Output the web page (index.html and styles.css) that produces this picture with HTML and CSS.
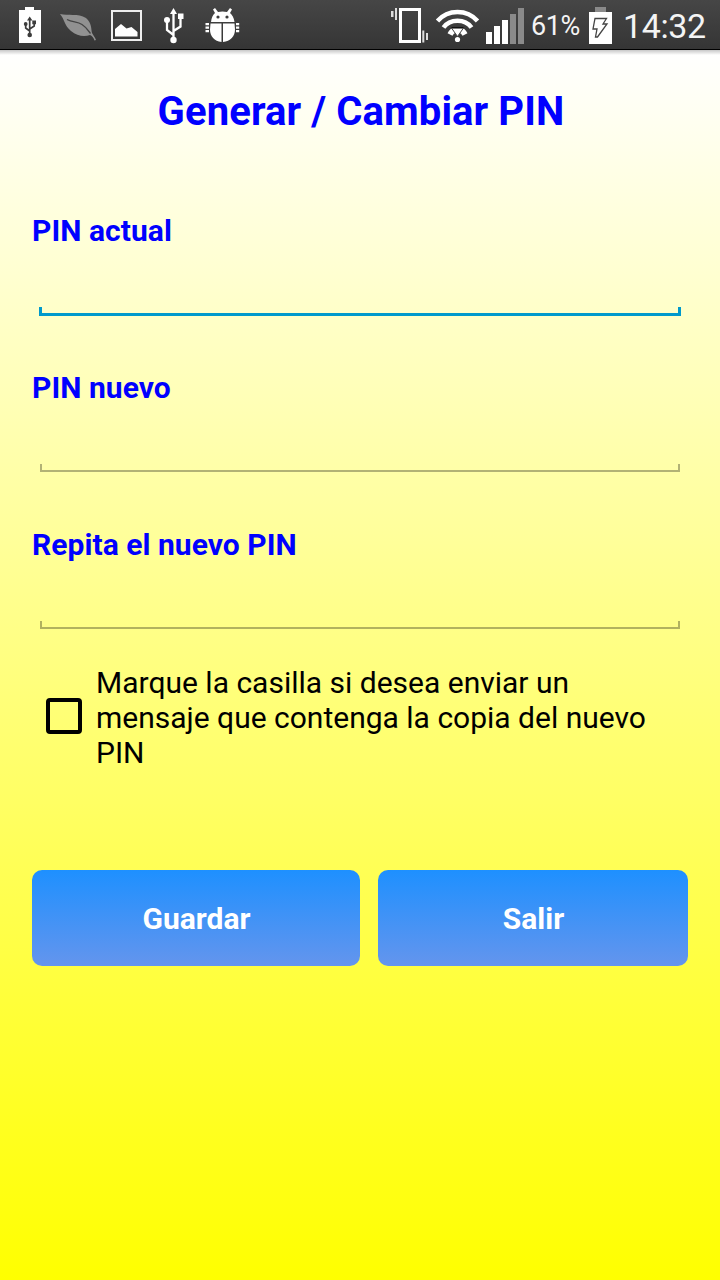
FILE: index.html
```html
<!DOCTYPE html>
<html lang="es">
<head>
    <meta charset="UTF-8">
    <title>Generar / Cambiar PIN</title>
    <meta name="viewport" content="width=device-width, initial-scale=1">
    <link rel="stylesheet" href="styles.css">
</head>
<body>
<header class="status-bar">
    <!-- notifications -->
    <svg class="status-bar__icons" width="250" height="49" viewBox="0 0 250 49">
        <path fill="#fff" d="M19 10h6V7h9v3h7v33H19z"/>
        <g fill="none" stroke="#3c3c3c" stroke-width="1.700">
            <path d="M29.700 19v15M29.700 31l-4-3v-3M29.700 29l4.500-3v-3"/>
            <path fill="#3c3c3c" stroke="none" d="M29.700 16.500l2.700 4h-5.400zM32.300 20.500h3.700v3.700h-3.700z"/>
            <circle cx="29.700" cy="35" r="2.300" fill="#3c3c3c" stroke="none"/>
            <circle cx="25.700" cy="24" r="1.900" fill="#3c3c3c" stroke="none"/>
        </g>
        <path fill="#919191" d="M60 14c8 2 18-1 26 4 6 5 5 11 6 15 1 2 3 4 4 7l-1.500.5c-1-3-2.500-4.500-4.500-5.500-6 2-13 1-19-4-7-6-6-11-11-17z"/>
        <path fill="none" stroke="#444" stroke-width="1.300" d="M67 19.500c6 3 10 2 15 5 4 2.500 6 6 8.500 9"/>
        <path fill="none" stroke="#eee" stroke-width="2" d="M112 11h29v29h-29z"/>
        <path fill="#fff" d="M115 36.500v-7.500l6-5 5.500 4.500 5-1.500 6 5v4.500z"/>
        <g fill="none" stroke="#fff" stroke-width="2.300">
            <path d="M173.500 12v26M173.500 35l-6.500-5v-9M173.500 31l7-4.500V18"/>
            <path fill="#fff" stroke="none" d="M173.500 8l3.500 6h-7zM178 13.500h5.500V19H178z"/>
            <circle cx="173.500" cy="40" r="3.200" fill="#fff" stroke="none"/>
            <circle cx="167" cy="20" r="3" fill="#fff" stroke="none"/>
        </g>
        <g fill="#fff">
            <path d="M211 22c.5-4.500 2-7.500 4-9l-2-3.500 2-1.500 3 4c3-.8 6-.8 9 0l3-4 2 1.500-2 3.500c2 1.500 4 4.500 4.500 9z"/>
            <path d="M210.500 23.500h11V42c-7-.5-11.500-6-11.500-12.500zM223 23.500h11.500l.5 6c0 6.500-4.500 12-12 12.500z"/>
            <path d="M205.500 23h3.500v2.300h-3.500zM205.500 26.500h3.500v2.300h-3.500zM205.500 30h3.500v2.300h-3.500zM236 23h3.200v2.300h-3.200zM236 26.500h3.200v2.300h-3.200zM236 30h3.200v2.300h-3.200z"/>
        </g>
        <circle cx="218" cy="17" r="1.600" fill="#3c3c3c"/>
        <circle cx="227" cy="17" r="1.600" fill="#3c3c3c"/>
    </svg>

    <!-- system -->
    <svg class="status-bar__icons status-bar__icons--system" width="136" height="49" viewBox="390 0 136 49">
        <path fill="none" stroke="#fff" stroke-width="3" d="M400.500 9.500h19v32h-19z"/>
        <path fill="#ddd" d="M391 11h2.500v6H391zM395 8h2v12h-2zM422.300 30.500h2v12h-2zM426 33h2v7h-2z"/>
        <g fill="none" stroke="#fff" stroke-width="4.500">
            <path d="M437.500 21C448 9 467 9 477.500 21M443.500 27.500C450 18.500 465 18.500 471.500 27.500"/>
            <path stroke-width="5.500" d="M450 34.500c1.500-3 3-4 5-4.500M465 34.500c-1.500-3-3-4-5-4.500"/>
        </g>
        <path fill="#fff" stroke="#444" stroke-width="1" d="M451.500 28h12l-6 8.500z"/>
        <path fill="none" stroke="#111" stroke-width="1.300" d="M451.500 27.600h12"/>
        <circle cx="457.500" cy="39.500" r="2.600" fill="#fff"/>
        <path fill="#fff" d="M486 32h6v12h-6zM494 26h6v18h-6zM502 20h6v24h-6z"/>
        <path fill="#8a8a8a" d="M510 14h6v30h-6zM518 8h6v36h-6z"/>
    </svg>
    <span class="status-bar__percent">61%</span>
    <svg class="status-bar__battery" width="23" height="49" viewBox="589 0 23 49">
        <path fill="#8a8a8a" d="M595 7h11v5h-11z"/>
        <path fill="#fff" d="M589 12h23v32h-23z"/>
        <path fill="none" stroke="#444" stroke-width="1.300" d="M595 18.500h11.500l-3.500 5.500h4l-9.500 13h-2l1.500-8h-4z"/>
    </svg>
    <span class="status-bar__time">14:32</span>
</header>

<main class="screen">
    <h1 class="title">Generar / Cambiar PIN</h1>
    <form class="form">
        <div class="field field--active">
            <label class="field__label" for="pin-actual">PIN actual</label>
            <input class="field__input" type="password" id="pin-actual">
            <div class="field__line"></div>
        </div>
        <div class="field">
            <label class="field__label" for="pin-nuevo">PIN nuevo</label>
            <input class="field__input" type="password" id="pin-nuevo">
            <div class="field__line"></div>
        </div>
        <div class="field">
            <label class="field__label" for="pin-repetir">Repita el nuevo PIN</label>
            <input class="field__input" type="password" id="pin-repetir">
            <div class="field__line"></div>
        </div>
        <label class="copy">
            <input class="copy__box" type="checkbox">
            <span>Marque la casilla si desea enviar un<br>mensaje que contenga la copia del nuevo<br>PIN</span>
        </label>
        <div class="buttons">
            <button class="button" type="button">Guardar</button>
            <button class="button" type="button">Salir</button>
        </div>
    </form>
</main>
</body>
</html>
```
FILE: styles.css
```css
* {
    box-sizing: border-box;
    margin: 0;
}

body {
    display: flex;
    flex-direction: column;
    height: 100vh;
    overflow: hidden;
    font-family: Roboto, sans-serif;
    font-size: 30px;
    line-height: 35px;
}

/*status bar*/

.status-bar {
    display: flex;
    flex: none;
    height: 50px;
    border-bottom: 1px solid #000;
    background: linear-gradient(#464646, #353535);
    color: #f4f4f4;
    white-space: nowrap;
}

.status-bar__icons {
    flex: none;
}

.status-bar__icons--system {
    margin-left: 140px;
}

.status-bar__percent {
    width: 58px;
    margin-left: 5px;
    font-size: 27px;
    letter-spacing: -.4px;
    line-height: 52px;
}

.status-bar__time {
    margin-left: 11px;
    font-size: 34px;
    letter-spacing: -.4px;
    line-height: 52px;
}

/*screen*/

.screen {
    flex: 1;
    padding: 38px 32px 0;
    background: linear-gradient(rgba(0, 0, 0, .22), rgba(0, 0, 0, 0)) 0 0 / 100% 5px no-repeat, linear-gradient(#fff, #ff0);
}

.title {
    margin-bottom: 78px;
    padding-left: 2px;
    color: #00f;
    font-size: 40px;
    letter-spacing: .1px;
    line-height: 47px;
    text-align: center;
}

/*fields*/

.field {
    display: flex;
    flex-direction: column;
    height: 157px;
}

.field__label {
    color: #00f;
    font-weight: bold;
    letter-spacing: .05px;
}

.field__input {
    height: 59px;
    margin: 0 8px;
    padding: 0 8px;
    border: 0;
    outline: 0;
    background: none;
    font: inherit;
}

.field__line {
    height: 8px;
    margin: 0 8px;
    border: 2px solid rgba(0, 0, 0, .3);
    border-top: 0;
}

.field--active .field__line {
    height: 9px;
    margin: 0 7px;
    border-color: #0099cc;
    border-width: 0 3px 3px;
}

/*checkbox*/

.copy {
    display: flex;
    align-items: center;
    gap: 14px;
    margin-top: -19px;
    padding-left: 14px;
}

.copy__box {
    flex: none;
    width: 36px;
    height: 36px;
    margin-bottom: 4px;
    border: 4px solid #000;
    border-radius: 4px;
    appearance: none;
}

/*buttons*/

.buttons {
    display: flex;
    gap: 18px;
    margin-top: 100px;
}

.button {
    width: 328px;
    height: 96px;
    padding: 0 0 0 1px;
    border: 0;
    border-radius: 10px;
    background: linear-gradient(#1e90ff, #6495ed);
    color: #fff;
    font: bold 30px Roboto, sans-serif;
}

.button:last-child {
    width: 310px;
}
```
